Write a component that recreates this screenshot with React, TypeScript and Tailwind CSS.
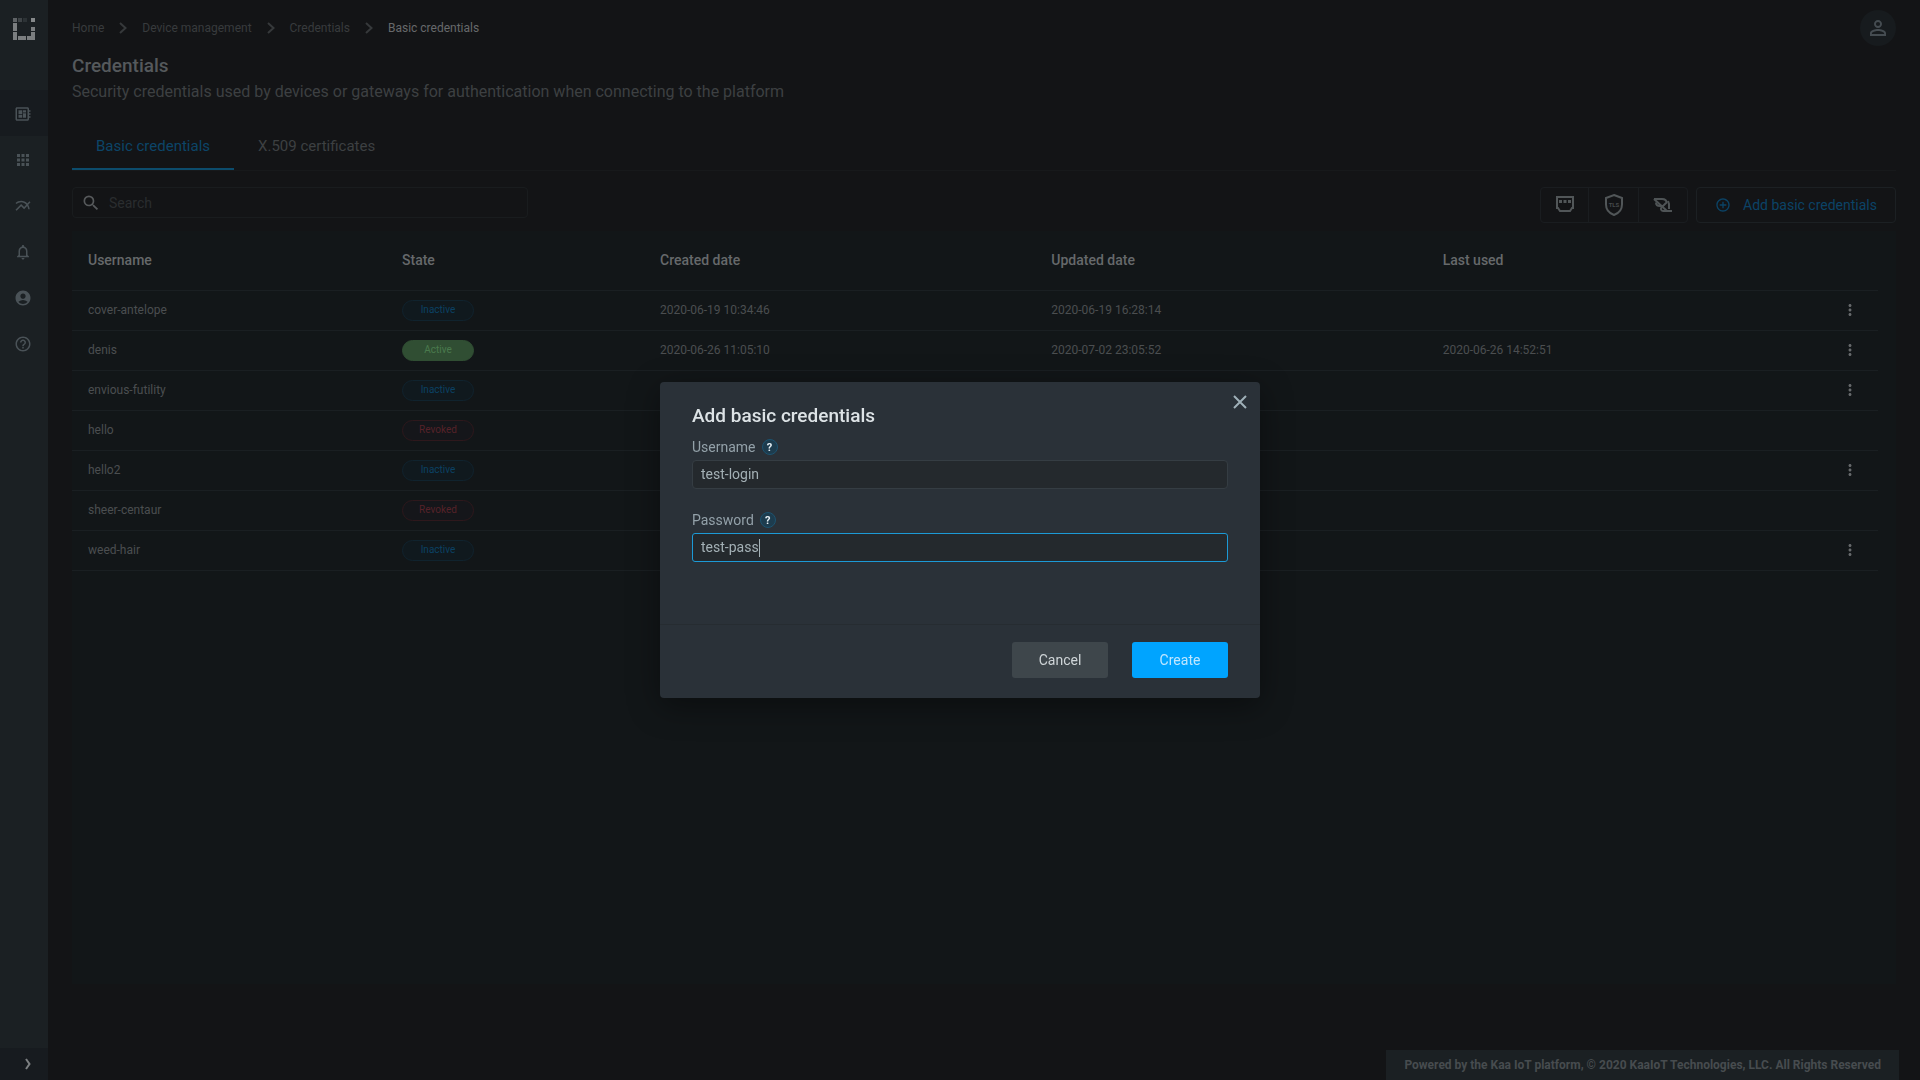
import React, { useState } from "react";
import {
  MdAccountCircle,
  MdAddCircleOutline,
  MdApps,
  MdHelpOutline,
  MdMoreVert,
  MdMultilineChart,
  MdNotificationsNone,
  MdOutlineDeveloperBoard,
  MdPersonOutline,
  MdSearch,
} from "react-icons/md";

type State = "Inactive" | "Active" | "Revoked";

const credentials: {
  username: string;
  state: State;
  created: string;
  updated: string;
  lastUsed: string;
}[] = [
  { username: "cover-antelope", state: "Inactive", created: "2020-06-19 10:34:46", updated: "2020-06-19 16:28:14", lastUsed: "" },
  { username: "denis", state: "Active", created: "2020-06-26 11:05:10", updated: "2020-07-02 23:05:52", lastUsed: "2020-06-26 14:52:51" },
  { username: "envious-futility", state: "Inactive", created: "", updated: "", lastUsed: "" },
  { username: "hello", state: "Revoked", created: "", updated: "", lastUsed: "" },
  { username: "hello2", state: "Inactive", created: "", updated: "", lastUsed: "" },
  { username: "sheer-centaur", state: "Revoked", created: "", updated: "", lastUsed: "" },
  { username: "weed-hair", state: "Inactive", created: "", updated: "", lastUsed: "" },
];

const stateStyles: Record<State, string> = {
  Inactive: "border-[#10232e] bg-[#10191e] text-[#0b4163]",
  Active: "border-[#304e33] bg-[#304e33] text-[#4a7a4d]",
  Revoked: "border-[#2e181c] bg-[#15161a] text-[#552229]",
};

const navItems = [
  { label: "Device management", icon: MdOutlineDeveloperBoard },
  { label: "Applications", icon: MdApps },
  { label: "Dashboards", icon: MdMultilineChart },
  { label: "Alerts", icon: MdNotificationsNone },
  { label: "Account", icon: MdAccountCircle },
  { label: "Help", icon: MdHelpOutline },
];

const parents = ["Home", "Device management", "Credentials"];

// Dotted frame logo, each entry is x, y, color
const logoDots: [number, number, string][] = [
  [0, 0, "#5f6366"],
  [5, 0, "#3f4447"],
  [10, 0, "#2c3235"],
  [18, 0, "#85888a"],
  [0, 5, "#7b7e80"],
  [0, 9, "#7b7e80"],
  [18, 9, "#7b7e80"],
  [0, 14, "#7b7e80"],
  [18, 14, "#7b7e80"],
  [0, 18, "#7b7e80"],
  [5, 18, "#7b7e80"],
  [9, 18, "#7b7e80"],
  [14, 18, "#7b7e80"],
  [18, 18, "#7b7e80"],
];

const Logo = () => (
  <svg width="22" height="22" viewBox="0 0 22 22" aria-hidden="true">
    {logoDots.map(([x, y, fill]) => (
      <rect key={`${x}-${y}`} x={x} y={y} width="4" height="4" fill={fill} />
    ))}
  </svg>
);

const Chevron = () => (
  <svg width="8" height="12" viewBox="0 0 8 12" fill="none" stroke="#36393b" strokeWidth="2" aria-hidden="true">
    <path d="M1 1l5.5 5L1 11" />
  </svg>
);

const PortIcon = () => (
  <svg width="20" height="20" viewBox="0 0 20 20" aria-hidden="true">
    <path d="M2 2h16v11h-1l-2 3H5l-2-3H2z" fill="none" stroke="#515658" strokeWidth="2" />
    <path d="M4 5h3v3H4zM8.500 5h3v3h-3zM13 5h3v3h-3z" fill="#515658" />
  </svg>
);

const TlsIcon = () => (
  <svg width="20" height="24" viewBox="0 0 20 24" fill="none" stroke="#515658" strokeWidth="2" aria-hidden="true">
    <path d="M10 2l8 3v6.500c0 5-3.200 8.700-8 10.500-4.800-1.800-8-5.500-8-10.500V5z" />
    <text x="10" y="14" fontSize="6" fontWeight="700" textAnchor="middle" fill="#45494b" stroke="none">
      TLS
    </text>
  </svg>
);

const UnlinkIcon = () => (
  <svg width="20" height="16" viewBox="0 0 20 16" fill="none" stroke="#4f5456" strokeWidth="2" aria-hidden="true">
    <path d="M1 2h8c3 0 4.500 1.500 4.500 3.500L10 9H7C4.500 9 3 7.500 3 5.500" />
    <path d="M1 2l13 12" />
    <path d="M15 4l1 3v5M9 10c-2 1.500-1 4 1 4h9" />
  </svg>
);

const HelpBadge = ({ label }: { label: string }) => (
  <button
    type="button"
    aria-label={label}
    className="flex size-4 items-center justify-center rounded-full border border-[#1c5370] bg-[#1d3c4e] text-[11px] font-bold leading-none text-[#e4eef4]"
  >
    ?
  </button>
);

const Sidebar = () => (
  <aside className="flex w-12 shrink-0 flex-col bg-[#1b2023]">
    <a href="#" aria-label="Kaa" className="flex h-[90px] justify-center pt-[18px]">
      <Logo />
    </a>
    <nav className="flex flex-col">
      {navItems.map(({ label, icon: Icon }, index) => (
        <a
          key={label}
          href="#"
          aria-label={label}
          className={`flex h-[46px] items-center pl-[14px] pt-0.5 text-[#4a5257] ${index === 0 ? "bg-[#171b1f]" : ""}`}
        >
          <Icon size={18} />
        </a>
      ))}
    </nav>
    <button type="button" aria-label="Expand menu" className="mt-auto flex h-8 items-center justify-center bg-[#171b1f] pl-2">
      <svg width="7" height="12" viewBox="0 0 7 12" fill="none" stroke="#7d8082" strokeWidth="2">
        <path d="M1 1l3.500 5L1 11" />
      </svg>
    </button>
  </aside>
);

const CredentialsTable = () => (
  <table className="w-full table-fixed text-left">
    <colgroup>
      <col className="w-[314px]" />
      <col className="w-[258px]" />
      <col />
      <col />
      <col />
      <col className="w-[60px]" />
    </colgroup>
    <thead>
      <tr className="h-[59px] border-b border-[#1a1f22] text-sm text-[#66696b]">
        <th className="pl-4 font-medium">Username</th>
        <th className="pl-4 font-medium">State</th>
        <th className="pl-4 font-medium">Created date</th>
        <th className="pl-4 font-medium">Updated date</th>
        <th className="pl-4 font-medium">Last used</th>
        <td />
      </tr>
    </thead>
    <tbody>
      {credentials.map((row) => (
        <tr key={row.username} className="h-10 border-b border-[#1a1f22] text-xs text-[#4b4e50]">
          <td className="pl-4">{row.username}</td>
          <td className="pl-4">
            <span
              className={`flex h-[21px] w-[72px] items-center justify-center rounded-full border text-[10px] ${stateStyles[row.state]}`}
            >
              {row.state}
            </span>
          </td>
          <td className="pl-4">{row.created}</td>
          <td className="pl-4">{row.updated}</td>
          <td className="pl-4">{row.lastUsed}</td>
          <td className="pl-1">
            {row.state !== "Revoked" && (
              <button type="button" aria-label={`Actions for ${row.username}`} className="flex w-full justify-center text-[#66696b]">
                <MdMoreVert size={18} />
              </button>
            )}
          </td>
        </tr>
      ))}
    </tbody>
  </table>
);

const AddCredentialsDialog = () => {
  const [username, setUsername] = useState("test-login");
  const [password, setPassword] = useState("test-pass");

  return (
    <div className="fixed inset-0 flex items-center justify-center">
      <form
        role="dialog"
        aria-labelledby="dialog-title"
        className="relative w-[600px] rounded bg-[#2a3138] shadow-[0_8px_32px_rgba(0,0,0,0.4)]"
        onSubmit={(e) => e.preventDefault()}
      >
        <button type="button" aria-label="Close" className="absolute right-3 top-3 flex size-4 items-center justify-center">
          <svg width="14" height="14" viewBox="0 0 14 14" stroke="#9fb0b8" strokeWidth="2">
            <path d="M1 1l12 12M13 1L1 13" />
          </svg>
        </button>
        <div className="flex h-[243px] flex-col border-b border-[#262c31] px-8 pt-5">
          <h2 id="dialog-title" className="text-[19px] font-medium leading-7 text-[#dde3e6]">
            Add basic credentials
          </h2>
          <div className="mt-1.5 flex h-[22px] items-center gap-1.5">
            <label htmlFor="username" className="text-sm text-[#93a1a9]">
              Username
            </label>
            <HelpBadge label="About username" />
          </div>
          <input
            id="username"
            value={username}
            onChange={(e) => setUsername(e.target.value)}
            className="mt-0.5 h-[29px] rounded-sm border border-[#353d43] bg-[#24292d] px-2 pb-0.5 text-sm text-[#a3b0b5] outline-none"
          />
          <div className="mt-5 flex h-[22px] items-center gap-1.5">
            <label htmlFor="password" className="text-sm text-[#93a1a9]">
              Password
            </label>
            <HelpBadge label="About password" />
          </div>
          <div className="relative mt-0.5">
            <input
              id="password"
              value={password}
              onChange={(e) => setPassword(e.target.value)}
              className="block h-[29px] w-full rounded-[3px] border border-[#1c9ad6] bg-[#24292d] px-2 pb-0.5 text-sm text-[#a3b0b5] caret-transparent outline-none"
            />
            {/* caret follows the typed value */}
            <div aria-hidden="true" className="pointer-events-none absolute inset-y-0 left-[9px] flex items-center">
              <span className="invisible text-sm">{password}</span>
              <span className="h-[18px] w-px bg-[#a3b0b5]" />
            </div>
          </div>
        </div>
        <div className="flex justify-end gap-6 px-8 pb-5 pt-[17px]">
          <button type="button" className="h-9 w-24 rounded-[3px] bg-[#3e464b] text-sm text-[#cfd5d8]">
            Cancel
          </button>
          <button type="submit" className="h-9 w-24 rounded-[3px] bg-[#00a4ff] text-sm text-[#bfe6ff]">
            Create
          </button>
        </div>
      </form>
    </div>
  );
};

const App = () => {
  return (
    <div className="flex min-h-screen bg-[#131416] font-['Roboto',sans-serif]">
      <Sidebar />
      <main className="flex min-w-0 flex-1 flex-col px-6 pb-24">
        <header className="flex h-12 items-center justify-between pt-2">
          <nav aria-label="Breadcrumb" className="flex items-center gap-[15px] text-xs text-[#383b3d]">
            {parents.map((item) => (
              <React.Fragment key={item}>
                <a href="#">{item}</a>
                <Chevron />
              </React.Fragment>
            ))}
            <span className="text-[#67696b]">Basic credentials</span>
          </nav>
          <button type="button" aria-label="Profile" className="flex size-9 items-center justify-center rounded-full bg-[#171b1e] text-[#454c51]">
            <MdPersonOutline size={24} />
          </button>
        </header>

        <h1 className="mt-1 text-[19px] font-medium leading-7 text-[#55595c]">Credentials</h1>
        <p className="text-base leading-6 text-[#3d4042]">
          Security credentials used by devices or gateways for authentication when connecting to the platform
        </p>

        <div role="tablist" className="mt-[18px] flex border-b border-[#17191b] text-[15px]">
          <button type="button" role="tab" aria-selected="true" className="h-12 border-b-2 border-[#0c4c6c] px-6 pt-0.5 text-[#0c4568]">
            Basic credentials
          </button>
          <button type="button" role="tab" aria-selected="false" className="h-12 border-b-2 border-transparent px-6 pt-0.5 text-[#3d4042]">
            X.509 certificates
          </button>
        </div>

        <div className="mt-4 flex items-start">
          <label className="flex h-[31px] w-[456px] items-center gap-2 rounded-sm border border-[#191c1e] pl-2">
            <MdSearch size={20} color="#56595b" />
            <input
              aria-label="Search"
              placeholder="Search"
              className="min-w-0 flex-1 bg-transparent text-sm outline-none placeholder:text-[#2a2d2f]"
            />
          </label>
          <div className="ml-auto flex h-9 divide-x divide-[#1a1d20] rounded-sm border border-[#1a1d20]">
            <button type="button" aria-label="Ports" className="flex w-12 items-center justify-center">
              <PortIcon />
            </button>
            <button type="button" aria-label="TLS" className="flex w-[50px] items-center justify-center">
              <TlsIcon />
            </button>
            <button type="button" aria-label="Unlink" className="flex w-12 items-center justify-center">
              <UnlinkIcon />
            </button>
          </div>
          <button
            type="button"
            className="ml-2 flex h-9 items-center gap-3 rounded-sm border border-[#1c2023] px-[18px] text-sm text-[#0b4366]"
          >
            <MdAddCircleOutline size={16} />
            Add basic credentials
          </button>
        </div>

        <section className="mt-2 flex-1 bg-[#121618] pr-[18px]">
          <CredentialsTable />
        </section>
      </main>

      <footer className="fixed bottom-0 right-[21px] bg-[#1b2023] px-[18px] py-[5px] text-xs font-bold leading-5 text-[#474c4f]">
        Powered by the Kaa IoT platform, © 2020 KaaIoT Technologies, LLC. All Rights Reserved
      </footer>

      <AddCredentialsDialog />
    </div>
  );
};

export default App;
